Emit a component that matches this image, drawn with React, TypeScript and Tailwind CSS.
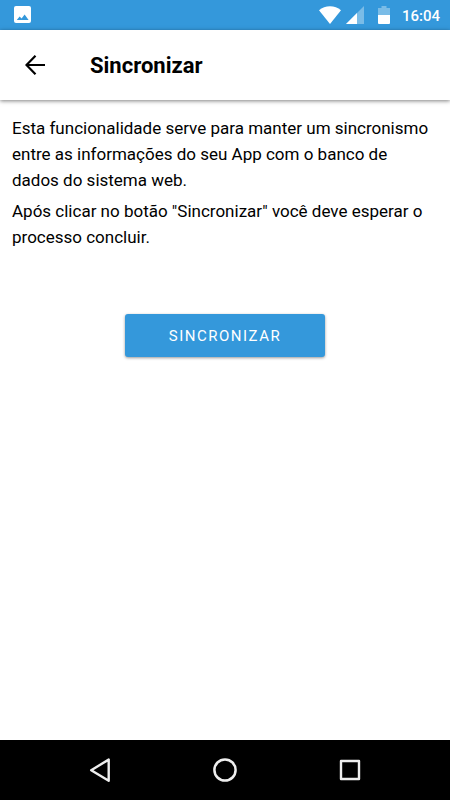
import React from "react";

function StatusBar() {
  return (
    <div className="flex h-[30px] items-center justify-between bg-[#3498db] pr-2.5 pl-3.5 text-white">
      <svg className="h-[18px] w-[17px]" viewBox="0 0 17 18" aria-hidden="true">
        <rect width="17" height="17" rx="2" fill="#fff" />
        <path d="M2.8 14 L5.6 10.4 L7.6 12.6 L10.6 8.6 L14.6 14 Z" fill="#3498db" />
      </svg>
      <div className="flex items-center">
        <svg className="h-[18px] w-[22px]" viewBox="0 0 22 18" aria-hidden="true">
          <path d="M0 4.3 C6 -1.2 16 -1.2 22 4.3 L11 18 Z" fill="#fff" />
        </svg>
        <svg className="ml-[5px] h-[18px] w-[18px]" viewBox="0 0 18 18" aria-hidden="true">
          <path d="M18 0 V18 H0 Z" fill="#fff" fillOpacity="0.35" />
          <path d="M11 7 V18 H0 Z" fill="#fff" />
        </svg>
        <svg className="ml-3.5 h-[18px] w-[12px]" viewBox="0 0 12 18" aria-hidden="true">
          <path d="M3.5 0 H8.5 V2 H12 V9 H0 V2 H3.5 Z" fill="#fff" fillOpacity="0.35" />
          <path d="M0 9 H12 V17 Q12 18 11 18 H1 Q0 18 0 17 Z" fill="#fff" />
        </svg>
        <span className="ml-3 pt-0.5 text-[15px] leading-5 font-medium">16:04</span>
      </div>
    </div>
  );
}

function Header() {
  return (
    <header className="flex h-[70px] items-center bg-white px-5 shadow-[0_1px_4px_rgba(0,0,0,0.5)]">
      <button type="button" aria-label="Voltar" className="flex h-[30px] w-[30px] items-center justify-center">
        <svg className="h-5 w-5" viewBox="0 0 20 20" fill="none" stroke="#000" strokeWidth="2.2" aria-hidden="true">
          <path d="M20 10 H1.5 M10.5 0.8 L1.5 10 L10.5 19.2" />
        </svg>
      </button>
      <h1 className="ml-10 pt-0.5 text-[22px] leading-8 font-bold text-black">Sincronizar</h1>
    </header>
  );
}

function NavBar() {
  return (
    <nav className="flex h-[60px] items-center justify-center gap-[75px] bg-black">
      <button type="button" aria-label="Voltar" className="flex w-[50px] justify-center">
        <svg className="h-7 w-7" viewBox="0 0 28 28" fill="none" stroke="#eee" strokeWidth="2.4" strokeLinejoin="round" aria-hidden="true">
          <path d="M22.7 3.6 V24.8 L5.2 14.2 Z" />
        </svg>
      </button>
      <button type="button" aria-label="Início" className="flex w-[50px] justify-center">
        <svg className="h-7 w-7" viewBox="0 0 28 28" fill="none" stroke="#eee" strokeWidth="2.5" aria-hidden="true">
          <circle cx="14" cy="14" r="10.6" />
        </svg>
      </button>
      <button type="button" aria-label="Recentes" className="flex w-[50px] justify-center">
        <svg className="h-7 w-7" viewBox="0 0 28 28" fill="none" stroke="#eee" strokeWidth="2.4" strokeLinejoin="round" aria-hidden="true">
          <rect x="5" y="5" width="18" height="18" />
        </svg>
      </button>
    </nav>
  );
}

export default function App() {
  return (
    <div className="flex min-h-screen flex-col bg-white font-['Roboto',sans-serif] text-black">
      <StatusBar />
      <Header />
      <main className="flex flex-1 flex-col px-3 pt-[15px]">
        <p className="text-[17px] leading-[26px]">
          Esta funcionalidade serve para manter um sincronismo entre as informações do seu App com o banco de dados do
          sistema web.
        </p>
        <p className="mt-[5px] text-[17px] leading-[26px]">
          Após clicar no botão "Sincronizar" você deve esperar o processo concluir.
        </p>
        <button
          type="button"
          className="mt-16 h-[43px] w-[200px] self-center rounded-[3px] bg-[#3498db] pt-0.5 text-[15px] font-normal tracking-[1.5px] text-white uppercase shadow-[0_1px_3px_rgba(0,0,0,0.4)]"
        >
          Sincronizar
        </button>
      </main>
      <NavBar />
    </div>
  );
}
